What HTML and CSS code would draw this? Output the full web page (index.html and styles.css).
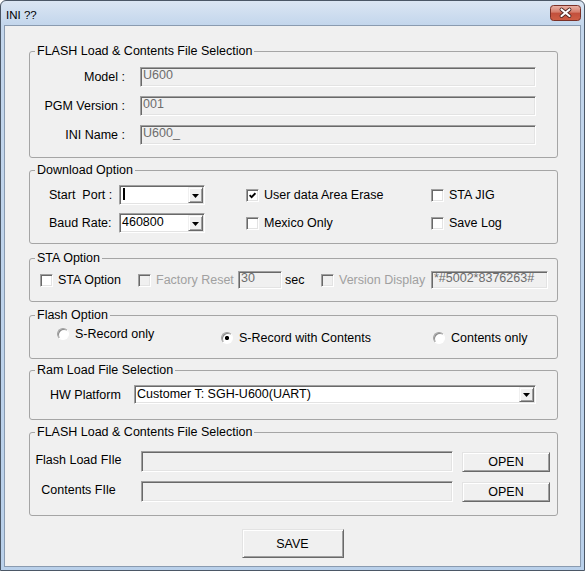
FILE: index.html
```html
<!DOCTYPE html>
<html>
<head>
<meta charset="utf-8">
<title>INI ??</title>
<link rel="stylesheet" href="styles.css">
</head>
<body>
<div class="window">
  <div class="titlebar">
    <span class="title">INI ??</span>
    <svg class="close" width="31" height="16" viewBox="0 0 31 16">
      <defs>
        <linearGradient id="cg" x1="0" y1="0" x2="0" y2="1">
          <stop offset="0" stop-color="#eab5aa"/>
          <stop offset="0.45" stop-color="#d57c6a"/>
          <stop offset="0.5" stop-color="#c24f3c"/>
          <stop offset="1" stop-color="#cf5f45"/>
        </linearGradient>
      </defs>
      <rect x="0.5" y="0.5" width="30" height="15" rx="3" fill="url(#cg)" stroke="#7a3128"/>
      <path d="M11.5 4.5 L19.5 11 M19.5 4.5 L11.5 11" stroke="#4a2420" stroke-width="3.8" stroke-linecap="round"/>
      <path d="M11.5 4.5 L19.5 11 M19.5 4.5 L11.5 11" stroke="#ffffff" stroke-width="2.2" stroke-linecap="round"/>
    </svg>
  </div>
  <div class="client">
    <fieldset class="group g1">
      <legend>FLASH Load &amp; Contents File Selection</legend>
      <div class="info-grid">
        <span class="lbl-right">Model :</span><div class="edit">U600</div>
        <span class="lbl-right">PGM Version :</span><div class="edit">001</div>
        <span class="lbl-right">INI Name :</span><div class="edit">U600_</div>
      </div>
    </fieldset>

    <fieldset class="group g2">
      <legend>Download Option</legend>
      <div class="dl-grid">
        <span class="pre">Start  Port :</span>
        <div class="combo small"><span class="combo-text"><span class="caret"></span></span><span class="drop"><svg width="7" height="4" viewBox="0 0 7 4"><path d="M0 0 H7 L3.5 4 Z" fill="#000"/></svg></span></div>
        <label class="check"><span class="cb"><svg width="7" height="7" viewBox="0 0 7 7"><path d="M0.6 3.2 L2.6 5.2 L6.4 1.2" fill="none" stroke="#000" stroke-width="1.8"/></svg></span>User data Area Erase</label>
        <label class="check"><span class="cb"></span>STA JIG</label>
        <span>Baud Rate:</span>
        <div class="combo small"><span class="combo-text">460800</span><span class="drop"><svg width="7" height="4" viewBox="0 0 7 4"><path d="M0 0 H7 L3.5 4 Z" fill="#000"/></svg></span></div>
        <label class="check"><span class="cb"></span>Mexico Only</label>
        <label class="check"><span class="cb"></span>Save Log</label>
      </div>
    </fieldset>

    <fieldset class="group g3">
      <legend>STA Option</legend>
      <div class="sta-grid">
        <label class="check"><span class="cb"></span>STA Option</label>
        <label class="check disabled"><span class="cb off"></span>Factory Reset</label>
        <div class="edit short">30</div>
        <span>sec</span>
        <label class="check disabled"><span class="cb off"></span>Version Display</label>
        <div class="edit short">*#5002*8376263#</div>
      </div>
    </fieldset>

    <fieldset class="group g4">
      <legend>Flash Option</legend>
      <div class="radio-grid">
        <label class="opt"><span class="radio"></span>S-Record only</label>
        <label class="opt low"><span class="radio on"></span>S-Record with Contents</label>
        <label class="opt low"><span class="radio"></span>Contents only</label>
      </div>
    </fieldset>

    <fieldset class="group g5">
      <legend>Ram Load File Selection</legend>
      <div class="hw-row">
        <span class="hw-label">HW Platform</span>
        <div class="combo wide"><span class="combo-text">Customer T: SGH-U600(UART)</span><span class="drop"><svg width="7" height="4" viewBox="0 0 7 4"><path d="M0 0 H7 L3.5 4 Z" fill="#000"/></svg></span></div>
      </div>
    </fieldset>

    <fieldset class="group g6">
      <legend>FLASH Load &amp; Contents File Selection</legend>
      <div class="file-row">
        <span class="file-label">Flash Load FIle</span>
        <div class="edit file"></div>
        <button class="btn open">OPEN</button>
      </div>
      <div class="file-row">
        <span class="file-label">Contents FIle</span>
        <div class="edit file"></div>
        <button class="btn open">OPEN</button>
      </div>
    </fieldset>

    <div class="save-row">
      <button class="btn save">SAVE</button>
    </div>
  </div>
</div>
</body>
</html>
```

FILE: styles.css
```css
* { box-sizing: border-box; }
html, body { margin: 0; padding: 0; }
body {
  width: 585px;
  height: 571px;
  overflow: hidden;
  background: #ffffff;
  font-family: "Liberation Sans", Arial, sans-serif;
  font-size: 12.5px;
  color: #000;
}

.window {
  width: 585px;
  height: 571px;
  border: 1px solid #4b5766;
  border-radius: 6px 6px 0 0;
  background: linear-gradient(#dbe6f3, #c3d6ec 24px, #b9d0ea);
  padding: 0 3px 3px;
  display: flex;
  flex-direction: column;
}

.titlebar {
  height: 24px;
  flex: none;
  display: flex;
  justify-content: space-between;
  align-items: flex-start;
}
.title {
  margin: 7px 0 0 2px;
  font-size: 11.5px;
  line-height: 14px;
  color: #000;
}
.close {
  display: block;
  margin-top: 4px;
}

.client {
  flex: 1;
  background: #f0f0f0;
  border: 1px solid #8a9bb0;
  display: flex;
  flex-direction: column;
}

/* group boxes */
.group {
  margin: 0 0 0 24px;
  width: 529px;
  min-width: 0;
  border: 1px solid #a5a5a5;
  border-radius: 3px;
  padding: 0;
}
.group legend {
  margin-left: 5px;
  padding: 0 2px;
  height: 15px;
  line-height: 15px;
}
.g1 { margin-top: 18px; padding: 8px 0 12px; }
.g2 { margin-top: 5px; padding: 7px 0 10px; }
.g3 { margin-top: 7px; padding: 5px 0 12px; }
.g4 { margin-top: 6px; padding: 3px 0 12px; }
.g5 { margin-top: 4px; padding: 7px 0 15px; }
.g6 { margin-top: 5px; padding: 11px 0 13px; }

/* sunken edit */
.edit {
  height: 20px;
  border: 1px solid;
  border-color: #a0a0a0 #ffffff #ffffff #a0a0a0;
  box-shadow: inset 1px 1px 0 #696969, inset -1px -1px 0 #e3e3e3;
  background: #f0f0f0;
  color: #6d6d6d;
  padding: 0 0 0 2px;
  line-height: 15px;
  white-space: nowrap;
  overflow: hidden;
}
.edit.short { height: 18px; line-height: 13px; }
.edit.file { width: 312px; margin-left: 14px; height: 21px; }

/* G1 */
.info-grid {
  display: grid;
  grid-template-columns: 95px 396px;
  column-gap: 15px;
  row-gap: 9px;
  grid-auto-rows: 20px;
  align-items: center;
}
.lbl-right { text-align: right; white-space: pre; }

/* combo */
.combo {
  height: 20px;
  border: 1px solid;
  border-color: #a0a0a0 #ffffff #ffffff #a0a0a0;
  box-shadow: inset 1px 1px 0 #696969, inset -1px -1px 0 #e3e3e3;
  background: #ffffff;
  padding: 1px;
  display: flex;
}
.combo.small { width: 86px; }
.combo.wide { width: 402px; height: 19px; }
.combo-text {
  flex: 1;
  padding-left: 1px;
  line-height: 15px;
  white-space: nowrap;
  overflow: hidden;
  display: flex;
  align-items: flex-start;
}
.caret {
  display: block;
  width: 2px;
  height: 12px;
  margin: 1px 0 0 1px;
  background: #000;
}
.drop {
  width: 15px;
  flex: none;
  background: #f0f0f0;
  border: 1px solid;
  border-color: #f0f0f0 #696969 #696969 #f0f0f0;
  box-shadow: inset 1px 1px 0 #ffffff, inset -1px -1px 0 #a0a0a0;
  display: flex;
  align-items: center;
  justify-content: center;
  padding-top: 1px;
}
.drop svg { display: block; }

/* G2 */
.dl-grid {
  display: grid;
  grid-template-columns: 70px 127px 185px auto;
  grid-auto-rows: 20px;
  row-gap: 8px;
  align-items: center;
  padding-left: 19px;
}
.pre { white-space: pre; }

/* checkbox */
.check {
  display: flex;
  align-items: center;
  gap: 5px;
  white-space: nowrap;
}
.check.disabled { color: #a0a0a0; }
.cb {
  width: 13px;
  height: 13px;
  flex: none;
  border: 1px solid;
  border-color: #a0a0a0 #ffffff #ffffff #a0a0a0;
  box-shadow: inset 1px 1px 0 #696969, inset -1px -1px 0 #e3e3e3;
  background: #ffffff;
  display: flex;
  align-items: center;
  justify-content: center;
}
.cb.off { background: #f0f0f0; }
.cb svg { display: block; }

/* G3 */
.sta-grid {
  display: grid;
  grid-template-columns: 98px 100px 47px 36px 110px 117px;
  grid-auto-rows: 18px;
  align-items: center;
  padding-left: 10px;
}
.sta-grid .edit.short:first-of-type { width: 44px; }

/* G4 */
.radio-grid {
  display: grid;
  grid-template-columns: 164px 212px auto;
  align-items: start;
  height: 20px;
  padding-left: 27px;
}
.opt {
  display: flex;
  align-items: center;
  gap: 6px;
  height: 16px;
  white-space: nowrap;
}
.opt.low { margin-top: 4px; }
.radio {
  width: 12px;
  height: 12px;
  flex: none;
  border-radius: 50%;
  border: 1px solid;
  border-color: #a0a0a0 #ffffff #ffffff #a0a0a0;
  box-shadow: inset 1px 1px 0 #8a8a8a;
  background: #ffffff;
}
.radio.on {
  background: radial-gradient(circle, #000 0, #000 1.8px, #ffffff 2.4px);
}

/* G5 */
.hw-row {
  display: flex;
  align-items: center;
  height: 19px;
  padding-left: 20px;
}
.hw-label { width: 84px; flex: none; }

/* G6 */
.file-row {
  display: flex;
  align-items: center;
  height: 21px;
}
.file-row + .file-row { margin-top: 9px; }
.file-label {
  width: 97px;
  flex: none;
  text-align: center;
  white-space: nowrap;
  margin-top: -3px;
}

/* buttons */
.btn {
  background: #f0f0f0;
  border: 1px solid;
  border-color: #e3e3e3 #696969 #696969 #e3e3e3;
  box-shadow: inset 1px 1px 0 #ffffff, inset -1px -1px 0 #a0a0a0;
  font-family: "Liberation Sans", Arial, sans-serif;
  font-size: 12.5px;
  color: #000;
  padding: 0;
  margin: 0;
}
.btn.open { width: 88px; height: 20px; margin-left: 9px; }
.save-row {
  display: flex;
  justify-content: center;
  margin-top: 13px;
}
.btn.save { width: 102px; height: 29px; }
```
